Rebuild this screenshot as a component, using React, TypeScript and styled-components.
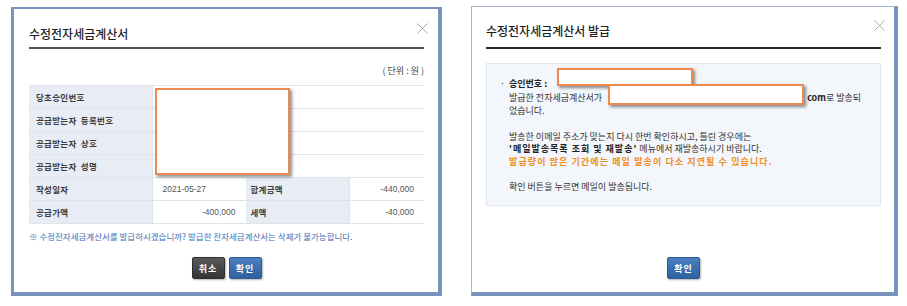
import React from 'react';
import styled, { createGlobalStyle } from 'styled-components';

const GlobalStyle = createGlobalStyle`
  html, body {
    margin: 0;
    padding: 0;
    background: #ffffff;
  }
  body {
    font-family: 'Noto Sans CJK KR', 'Noto Sans', sans-serif;
    color: #333333;
  }
`;

const Page = styled.div`
  display: flex;
  align-items: stretch;
  gap: 29px;
  padding: 6px 0 0 11px;
`;

const Panel = styled.div<{ $width: number; $edge: string; $color: string; $top?: number; $pad: string }>`
  position: relative;
  box-sizing: border-box;
  display: flex;
  flex-direction: column;
  width: ${(p) => p.$width}px;
  margin-top: ${(p) => p.$top ?? 0}px;
  padding: ${(p) => p.$pad};
  background: #ffffff;
  border-style: solid;
  border-width: ${(p) => p.$edge};
  border-color: ${(p) => p.$color};
`;

const Header = styled.div<{ $pad: string; $line: string }>`
  display: flex;
  justify-content: space-between;
  align-items: flex-start;
  padding: ${(p) => p.$pad};
  border-bottom: 2px solid ${(p) => p.$line};
`;

const Title = styled.h2`
  margin: 0;
  font-size: 12px;
  line-height: 16px;
  font-weight: 500;
  color: #1e1e1e;
`;

const CloseBtn = styled.button`
  display: flex;
  margin: -3px -4px 0 0;
  padding: 0;
  border: 0;
  background: none;
  cursor: pointer;
`;

const Unit = styled.div`
  margin: 16px 0 8px;
  font-size: 9px;
  line-height: 12px;
  text-align: right;
  color: #444444;
`;

const TableWrap = styled.div`
  position: relative;
`;

const Table = styled.table`
  width: 100%;
  border-collapse: collapse;
  border-top: 1px solid #dfe4ea;
  table-layout: fixed;
`;

const Th = styled.th<{ $indent?: number }>`
  height: 22px;
  padding: 0 0 0 ${(p) => p.$indent ?? 7}px;
  background: #e8edf5;
  border-bottom: 1px solid #dfe4ea;
  border-right: 1px solid #dfe4ea;
  text-align: left;
  font-size: 8.5px;
  font-weight: bold;
  letter-spacing: 0.3px;
  word-spacing: 2px;
  color: #3c3c3c;
  white-space: nowrap;
`;

const Td = styled.td<{ $align?: 'left' | 'right' }>`
  height: 22px;
  padding: 0 ${(p) => (p.$align === 'right' ? '10px' : '0')} 0 ${(p) => (p.$align === 'right' ? '0' : '10px')};
  border-bottom: 1px solid #dfe4ea;
  border-right: 1px solid #e8ecf1;
  text-align: ${(p) => p.$align ?? 'left'};
  font-family: 'Liberation Sans', Arial, sans-serif;
  font-size: 8.5px;
  color: #555555;
  &:last-child {
    border-right: 0;
  }
`;

const Redact = styled.div<{ $x: number; $y: number; $w: number; $h: number }>`
  position: absolute;
  left: ${(p) => p.$x}px;
  top: ${(p) => p.$y}px;
  width: ${(p) => p.$w}px;
  height: ${(p) => p.$h}px;
  box-sizing: border-box;
  background: #ffffff;
  border: 2px solid #ee8a50;
  box-shadow: 2px 2px 3px rgba(0, 0, 0, 0.45);
`;

const Notice = styled.p`
  margin: 7px 0 0;
  font-size: 8.5px;
  line-height: 10px;
  color: #3d6fb4;
  white-space: nowrap;
`;

const Buttons = styled.div<{ $auto?: boolean }>`
  display: flex;
  justify-content: center;
  gap: 4px;
  margin-top: ${(p) => (p.$auto ? 'auto' : '16px')};
`;

const Button = styled.button<{ $tone: 'dark' | 'blue' }>`
  width: 33px;
  height: 22px;
  padding: 0;
  border: 1px solid ${(p) => (p.$tone === 'dark' ? '#2e2e2e' : '#2d5b98')};
  border-radius: 2px;
  background: ${(p) =>
    p.$tone === 'dark'
      ? 'linear-gradient(#5a5a5a, #353535)'
      : 'linear-gradient(#4c7fc0, #2f609f)'};
  box-shadow: 1px 1px 2px rgba(0, 0, 0, 0.3);
  font-family: 'Noto Sans CJK KR', sans-serif;
  font-size: 9px;
  font-weight: bold;
  letter-spacing: 1px;
  color: #ffffff;
`;

const InfoBox = styled.div`
  position: relative;
  margin-top: 14px;
  padding: 13px 14px 11px 13px;
  background: #f3f6fa;
  border: 1px solid #e3e8ef;
  display: flex;
  font-size: 9px;
  color: #333333;
`;

const Bullet = styled.span`
  width: 9px;
  flex: none;
  line-height: 13.5px;
`;

const InfoBody = styled.div`
  flex: 1;
`;

const Para = styled.p<{ $gap?: number; $lh: number }>`
  margin: ${(p) => p.$gap ?? 0}px 0 0;
  line-height: ${(p) => p.$lh}px;
  white-space: nowrap;
`;

const Strong = styled.b<{ $wide?: boolean }>`
  color: #222222;
  letter-spacing: ${(p) => (p.$wide ? '1px' : '0')};
`;

const Warn = styled.b`
  color: #f28c22;
  letter-spacing: 1.1px;
`;

const MailGap = styled.span`
  display: inline-block;
  width: 203px;
`;

const CloseIcon = () => (
  <svg width="11" height="11" viewBox="0 0 11 11">
    <path d="M0.5 0.5 L10.5 10.5 M10.5 0.5 L0.5 10.5" stroke="#a8a8a8" strokeWidth="1" fill="none" />
  </svg>
);

const topRows = ['당초승인번호', '공급받는자 등록번호', '공급받는자 상호', '공급받는자 성명'];

export default function App() {
  return (
    <>
      <GlobalStyle />
      <Page>
        <Panel $width={431} $edge="2px 4px 4px 3px" $color="#7994bc" $top={1} $pad="0 14px 13px 15px">
          <Header $pad="17px 0 5px" $line="#555555">
            <Title>수정전자세금계산서</Title>
            <CloseBtn aria-label="닫기">
              <CloseIcon />
            </CloseBtn>
          </Header>
          <Unit>( 단위 : 원 )</Unit>
          <TableWrap>
            <Table>
              <colgroup>
                <col style={{ width: 123 }} />
                <col style={{ width: 94 }} />
                <col style={{ width: 103 }} />
                <col />
              </colgroup>
              <tbody>
                {topRows.map((label) => (
                  <tr key={label}>
                    <Th>{label}</Th>
                    <Td colSpan={3} />
                  </tr>
                ))}
                <tr>
                  <Th>작성일자</Th>
                  <Td>2021-05-27</Td>
                  <Th $indent={4}>합계금액</Th>
                  <Td $align="right">-440,000</Td>
                </tr>
                <tr>
                  <Th>공급가액</Th>
                  <Td $align="right">-400,000</Td>
                  <Th $indent={4}>세액</Th>
                  <Td $align="right">-40,000</Td>
                </tr>
              </tbody>
            </Table>
            <Redact $x={126} $y={3} $w={135} $h={87} />
          </TableWrap>
          <Notice>※ 수정전자세금계산서를 발급하시겠습니까? 발급한 전자세금계산서는 삭제가 불가능합니다.</Notice>
          <Buttons>
            <Button $tone="dark">취소</Button>
            <Button $tone="blue">확인</Button>
          </Buttons>
        </Panel>

        <Panel $width={427} $edge="1px 4px 4px 1px" $color="#a7b6cb #7994bc #7994bc #a7b6cb" $pad="0 13px 13px 14px">
          <Header $pad="16px 0 8px" $line="#2a2a2a">
            <Title>수정전자세금계산서 발급</Title>
            <CloseBtn aria-label="닫기">
              <CloseIcon />
            </CloseBtn>
          </Header>
          <InfoBox>
            <Bullet>·</Bullet>
            <InfoBody>
              <Para $lh={13.5}>
                <Strong>승인번호 :</Strong>
                <br />
                발급한 전자세금계산서가 <MailGap />
                <Strong>com</Strong>로 발송되
                <br />
                었습니다.
              </Para>
              <Para $lh={12.5} $gap={13}>
                발송한 이메일 주소가 맞는지 다시 한번 확인하시고, 틀린 경우에는
                <br />
                <Strong $wide>'메일발송목록 조회 및 재발송'</Strong> 메뉴에서 재발송하시기 바랍니다.
                <br />
                <Warn>발급량이 많은 기간에는 메일 발송이 다소 지연될 수 있습니다.</Warn>
              </Para>
              <Para $lh={12.5} $gap={13}>
                확인 버튼을 누르면 메일이 발송됩니다.
              </Para>
            </InfoBody>
            <Redact $x={70} $y={4} $w={136} $h={18} />
            <Redact $x={121} $y={20} $w={196} $h={21} />
          </InfoBox>
          <Buttons $auto>
            <Button $tone="blue">확인</Button>
          </Buttons>
        </Panel>
      </Page>
    </>
  );
}
